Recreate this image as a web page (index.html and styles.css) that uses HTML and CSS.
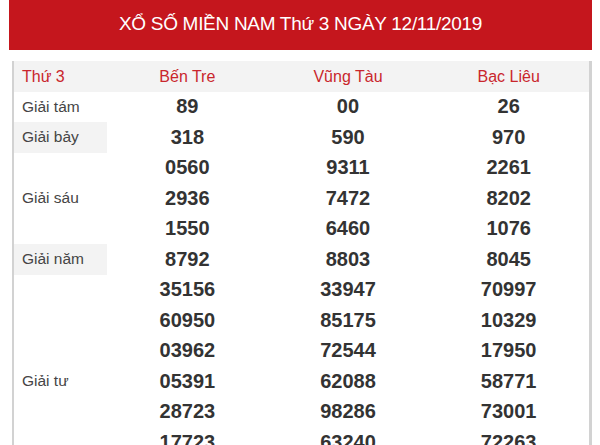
FILE: index.html
```html
<!DOCTYPE html>
<html lang="vi">
<head>
<meta charset="utf-8">
<link rel="stylesheet" href="styles.css">
</head>
<body>
<div class="page">
  <div class="banner">XỔ SỐ MIỀN NAM Thứ 3 NGÀY 12/11/2019</div>
  <div class="results">
    <div class="head first">Thứ 3</div>
    <div class="head">Bến Tre</div>
    <div class="head">Vũng Tàu</div>
    <div class="head">Bạc Liêu</div>

    <div class="label">Giải tám</div>
    <div class="num">89</div><div class="num">00</div><div class="num">26</div>

    <div class="label alt">Giải bảy</div>
    <div class="num">318</div><div class="num">590</div><div class="num">970</div>

    <div class="label span3">Giải sáu</div>
    <div class="num">0560</div><div class="num">9311</div><div class="num">2261</div>
    <div class="num">2936</div><div class="num">7472</div><div class="num">8202</div>
    <div class="num">1550</div><div class="num">6460</div><div class="num">1076</div>

    <div class="label alt">Giải năm</div>
    <div class="num">8792</div><div class="num">8803</div><div class="num">8045</div>

    <div class="label span7">Giải tư</div>
    <div class="num">35156</div><div class="num">33947</div><div class="num">70997</div>
    <div class="num">60950</div><div class="num">85175</div><div class="num">10329</div>
    <div class="num">03962</div><div class="num">72544</div><div class="num">17950</div>
    <div class="num">05391</div><div class="num">62088</div><div class="num">58771</div>
    <div class="num">28723</div><div class="num">98286</div><div class="num">73001</div>
    <div class="num">17723</div><div class="num">63240</div><div class="num">72263</div>
  </div>
</div>
</body>
</html>
```
FILE: styles.css
```css
html, body {
  margin: 0;
  padding: 0;
  background: #ffffff;
}
body {
  font-family: "Liberation Sans", Arial, sans-serif;
  overflow: hidden;
}
.page {
  padding: 0 8px 0 9px;
}
.banner {
  height: 50px;
  background: #c5161d;
  color: #ffffff;
  font-size: 19px;
  line-height: 48px;
  text-align: center;
  letter-spacing: -0.3px;
}
.results {
  margin: 11px 0 0 3px;
  border-left: 2px solid #d2d2d2;
  border-right: 3px solid #d2d2d2;
  display: grid;
  grid-template-columns: 93px 1fr 1fr 1fr;
  grid-auto-rows: 30.5px;
}
.head {
  background: #f3f3f3;
  color: #c9262c;
  font-size: 16px;
  display: flex;
  align-items: center;
  justify-content: center;
  padding-top: 1px;
}
.head.first {
  justify-content: flex-start;
  padding-left: 8px;
}
.label {
  color: #454545;
  font-size: 15.5px;
  display: flex;
  align-items: center;
  padding-left: 8px;
}
.label.alt {
  background: #f3f3f3;
}
.label.span3 {
  grid-row: span 3;
}
.label.span7 {
  grid-row: span 7;
}
.num {
  color: #333333;
  font-weight: bold;
  font-size: 20px;
  display: flex;
  align-items: center;
  justify-content: center;
}
```
